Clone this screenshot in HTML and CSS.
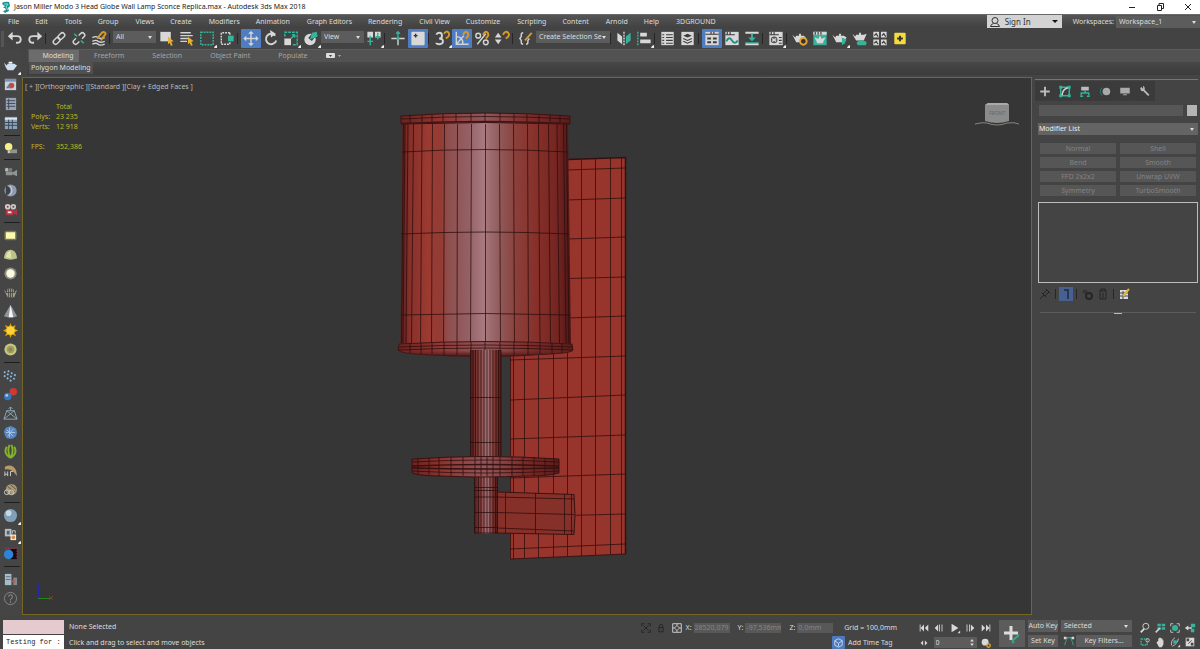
FILE: index.html
```html
<!DOCTYPE html>
<html lang="en">
<head>
<meta charset="utf-8">
<title>Jason Miller Modo 3 Head Globe Wall Lamp Sconce Replica.max - Autodesk 3ds Max 2018</title>
<link rel="stylesheet" href="styles.css">
</head>
<body>
<header class="titlebar">
  <svg class="app-icon" viewBox="0 0 10 12"><path d="M1 2Q4 0 8 1L9 5 7 7 8 10 4 12 2 10 5 9 4 7 2 7 4 5 2 4Z" fill="#17938f"/><path d="M3 3L7 3 5 6 7 9" stroke="#8fe0da" fill="none"/></svg>
  <h1 class="title">Jason Miller Modo 3 Head Globe Wall Lamp Sconce Replica.max - Autodesk 3ds Max 2018</h1>
  <button class="win" aria-label="Minimize"><svg viewBox="0 0 10 10"><path d="M2 5.500H8" stroke="#222"/></svg></button>
  <button class="win" aria-label="Restore"><svg viewBox="0 0 10 10"><path d="M2.500 3.500H6.500V8.500H2.500ZM4 3V1.500H8.500V6.500H7" fill="none" stroke="#222"/></svg></button>
  <button class="win" aria-label="Close"><svg viewBox="0 0 10 10"><path d="M2 2L8 8M8 2L2 8" stroke="#222"/></svg></button>
</header>

<div class="menubar">
  <nav class="menus">
    <button>File</button><button>Edit</button><button>Tools</button><button>Group</button><button>Views</button><button>Create</button><button>Modifiers</button><button>Animation</button><button>Graph Editors</button><button>Rendering</button><button>Civil View</button><button>Customize</button><button>Scripting</button><button>Content</button><button>Arnold</button><button>Help</button><button>3DGROUND</button>
  </nav>
  <button class="signin"><svg viewBox="0 0 12 12"><circle cx="6" cy="4.500" r="3"/><path d="M4.500 7.500Q2 8 1.500 10.500H10.500Q10 8 7.500 7.500"/></svg><span>Sign In</span><i class="caret"></i></button>
  <label class="ws-label" for="ws">Workspaces:</label>
  <span class="select ws"><select id="ws"><option>Workspace_1</option></select></span>
</div>

<div class="toolbar" role="toolbar" aria-label="Main toolbar">
  <i class="grip"></i>
  <button class="ic" aria-label="Undo"><svg viewBox="0 0 20 20"><path class="s thick" d="M5 7.500H12Q16 7.500 16 11T12 14.500H11"/><path class="f" d="M7.500 3V12L2.500 7.500Z"/></svg></button>
  <button class="ic" aria-label="Redo"><svg viewBox="0 0 20 20"><path class="s thick" d="M15 7.500H8Q4 7.500 4 11T8 14.500H9"/><path class="f" d="M12.500 3V12L17.500 7.500Z"/></svg></button>
  <i class="sep"></i>
  <button class="ic" aria-label="Link"><svg viewBox="0 0 20 20"><g class="s" transform="rotate(-45 10 10)"><rect x="2.500" y="7.500" width="8" height="5" rx="2.500"/><rect x="9.500" y="7.500" width="8" height="5" rx="2.500"/></g></svg></button>
  <button class="ic" aria-label="Unlink"><svg viewBox="0 0 20 20"><g class="s" transform="rotate(-45 10 10)"><path d="M8 7.500H5Q2.500 7.500 2.500 10T5 12.500H8M12 7.500H15Q17.500 7.500 17.500 10T15 12.500H12"/></g><path class="ts" d="M5 5L8 8M12 12L15 15"/></svg></button>
  <button class="ic" aria-label="Bind to space warp"><svg viewBox="0 0 20 20"><path class="s" d="M3 9Q7 7 9 9T16 9M3 13Q7 11 9 13T16 13M3 16Q7 14 9 16T16 16"/><path class="ys" d="M8 10L13 4Q16 2 17 5L12 12"/></svg></button>
  <i class="sep"></i>
  <span class="select filter"><select aria-label="Selection filter"><option>All</option></select></span>
  <button class="ic" aria-label="Select object"><svg viewBox="0 0 20 20"><path class="f" d="M3 3H14V13H3Z"/><path class="y" d="M11 8L17 13 14.500 13.500 16 17 14 17.500 13 14.500 11 16Z"/></svg></button>
  <button class="ic" aria-label="Select by name"><svg viewBox="0 0 20 20"><path class="s" d="M3 4H14M3 7H16M3 10H11M3 13H10"/><path class="y" d="M11 8L17 13 14.500 13.500 16 17 14 17.500 13 14.500 11 16Z"/></svg></button>
  <button class="ic fly" aria-label="Rectangular region"><svg viewBox="0 0 20 20"><rect class="ts" x="3.500" y="3.500" width="13" height="13" stroke-dasharray="2 1"/></svg></button>
  <button class="ic" aria-label="Window crossing"><svg viewBox="0 0 20 20"><path class="s" d="M13 4H4V16H13V14M13 4V6" stroke-dasharray="2 1"/><rect class="t" x="11" y="7" width="6" height="6"/></svg></button>
  <i class="sep"></i>
  <button class="ic on" aria-label="Move"><svg viewBox="0 0 20 20"><path class="s" d="M10 4V16M4 10H16"/><path class="f" d="M10 2L13 5H7ZM10 18L13 15H7ZM2 10L5 7V13ZM18 10L15 7V13Z"/></svg></button>
  <button class="ic" aria-label="Rotate"><svg viewBox="0 0 20 20"><path class="s thick" d="M14.500 7A5.500 5.500 0 1 0 15.500 12"/><path class="f" d="M9 1L15 5 10 9Z"/></svg></button>
  <button class="ic fly" aria-label="Scale"><svg viewBox="0 0 20 20"><path class="f" d="M3 10H10V17H3Z"/><path class="ts" d="M3.500 8V3.500H16.500V16.500H12" stroke-dasharray="3 1"/><path class="ts" d="M10 10L14 6M14 6H11M14 6V9"/></svg></button>
  <button class="ic fly" aria-label="Place"><svg viewBox="0 0 20 20"><circle class="f" cx="9" cy="11" r="6"/><path d="M9 11L15 4" stroke="#444" stroke-width="5"/><path class="t" d="M9 11L11 4 16 3 17 8Z"/></svg></button>
  <span class="select coord-sys"><select aria-label="Reference coordinate system"><option>View</option></select></span>
  <button class="ic fly" aria-label="Pivot center"><svg viewBox="0 0 20 20"><path class="f" d="M3 3H9V9H3ZM11 3H17V9H11Z"/><path class="ts" d="M6 7V17M3 13H9M14 4V11M11.500 8H16.500"/></svg></button>
  <i class="sep"></i>
  <button class="ic" aria-label="Manipulate"><svg viewBox="0 0 20 20"><path class="s" d="M3 10H17M10 10V17"/><path class="ts" d="M10 3V10M8 5L10 3 12 5"/><circle class="t" cx="10" cy="10" r="1.500"/></svg></button>
  <button class="ic on" aria-label="Keyboard override"><svg viewBox="0 0 20 20"><rect class="f" x="3" y="3" width="14" height="14" rx="1"/><path d="M5.500 7H9.500M7.500 5V9" stroke="#333" stroke-width="1.500"/></svg></button>
  <i class="sep"></i>
  <button class="ic fly" aria-label="Snaps"><svg viewBox="0 0 20 20"><path class="s thick" d="M4 6Q5 4 7.500 4T10 7 7 10Q11 10 11 13T7.500 16 4 14.500"/><path class="ys" d="M12 5Q15 1 17 4T14 10"/></svg></button>
  <button class="ic on" aria-label="Angle snap"><svg viewBox="0 0 20 20"><path class="s" d="M4 3V16H17M4 16L12 7M4 8Q11 8 11 16"/><path class="ys" d="M11 6Q14 1 16 4T14 10"/></svg></button>
  <button class="ic" aria-label="Percent snap"><svg viewBox="0 0 20 20"><circle class="s" cx="6" cy="7" r="2.500"/><circle class="s" cx="14" cy="14" r="2.500"/><path class="s" d="M5 16L14 5"/><path class="ys" d="M11 6Q14 1 16 4T14 10"/></svg></button>
  <button class="ic" aria-label="Spinner snap"><svg viewBox="0 0 20 20"><path class="f" d="M6 4L9.500 9H2.500ZM6 16L9.500 11H2.500Z"/><path class="ys" d="M11 6Q14 1 16.500 4T14 10"/></svg></button>
  <i class="sep"></i>
  <button class="ic" aria-label="Edit selection sets"><svg viewBox="0 0 20 20"><path class="s" d="M7 4Q5 4 5 6V8L3.500 10 5 12V14Q5 16 7 16M10 16Q12 16 12 14V12L13.500 10"/><path class="ys" d="M9 12L16 4"/></svg></button>
  <span class="select sets"><select aria-label="Named selection sets"><option>Create Selection Se</option></select></span>
  <i class="sep"></i>
  <button class="ic" aria-label="Mirror"><svg viewBox="0 0 20 20"><path class="f" d="M3 4L8 8V16L3 12Z"/><path class="t" d="M17 4L12 8V16L17 12Z"/><path class="s" d="M10 3V17" stroke-dasharray="2 1"/></svg></button>
  <button class="ic fly" aria-label="Align"><svg viewBox="0 0 20 20"><path class="f" d="M6 4H13V8H6ZM6 11H17V15H6Z"/><path class="ts" d="M3.500 3V17" stroke-dasharray="2 1"/></svg></button>
  <i class="sep"></i>
  <button class="ic" aria-label="Scene explorer"><svg viewBox="0 0 20 20"><rect class="f" x="3" y="3" width="13" height="14"/><path class="d" d="M4 6H6M8 6H15M4 9H6M8 9H15M4 12H6M8 12H15M4 15H6M8 15H15"/></svg></button>
  <button class="ic" aria-label="Layer explorer"><svg viewBox="0 0 20 20"><rect class="f" x="3" y="3" width="13" height="14"/><path d="M5 7L9.500 5 14 7 9.500 9Z" fill="#3b3b3b"/><path class="d" d="M5 10L9.500 12 14 10M5 13L9.500 15 14 13"/></svg></button>
  <i class="sep"></i>
  <button class="ic on" aria-label="Toggle ribbon"><svg viewBox="0 0 20 20"><rect class="f" x="3" y="3" width="14" height="14"/><path class="d" d="M3 5.500H17M9 3V5M12 3V5"/><path d="M5 10H9M11 10H15M5 14H9M11 14H15" stroke="#3b3b3b" stroke-width="2"/></svg></button>
  <button class="ic" aria-label="Curve editor"><svg viewBox="0 0 20 20"><rect class="f" x="3" y="3" width="14" height="14"/><path class="d" d="M3 6H13M5 3V6M8 3V6"/><path d="M4 13Q7 7 10 12T16 12" fill="none" stroke="#218c80" stroke-width="2"/></svg></button>
  <button class="ic" aria-label="Schematic view"><svg viewBox="0 0 20 20"><path class="f" d="M3 3H17V5H3ZM3 15H17V17H3Z"/><path class="t" d="M9 5H11V9H14L10 13 6 9H9ZM3 14H17V15H3Z"/></svg></button>
  <i class="sep"></i>
  <button class="ic fly" aria-label="Material editor"><svg viewBox="0 0 20 20"><rect class="f" x="3" y="3" width="14" height="14"/><path class="d" d="M3 6H13M5 3V6M8 3V6M13 9H16M13 12H16M13 15H16"/><circle cx="8" cy="11.500" r="3.500" fill="#555"/><path class="s" d="M6 10L10 13M10 10L6 13"/></svg></button>
  <i class="sep"></i>
  <button class="ic" aria-label="Render setup"><svg viewBox="0 0 20 20"><path class="f" d="M2 6L5 9 6 7H14L16 9 14 14H6L4 10ZM9 5H11V7H9Z"/><circle cx="13.500" cy="13" r="3.500" fill="#333" stroke="#e5a52c" stroke-width="2"/></svg></button>
  <button class="ic" aria-label="Rendered frame window"><svg viewBox="0 0 20 20"><rect class="t" x="3" y="3" width="14" height="14"/><path class="f" d="M3 3H17V6H3ZM4 9L7 10H12L16 9 14 12 13 15H7L6 12ZM9 8H11V10H9Z"/><path class="d" d="M5 3V6M8 3V6M11 3V6"/></svg></button>
  <button class="ic fly" aria-label="Render production"><svg viewBox="0 0 20 20"><path class="f" d="M2 6L5 9 6 7H14L17 9 13 14H6L4 10ZM9 5H11V7H9Z"/><path class="t" d="M12 9L17 11 15 15 12 17Z"/></svg></button>
  <button class="ic" aria-label="Render in cloud"><svg viewBox="0 0 20 20"><path class="f" d="M2 5L5 8 6 6H14L17 5 14 12H6L4 9ZM9 4H11V6H9Z"/><path class="t" d="M8 17Q5 15 8 13 11 10 13 13 17 12 17 15L16 17Z"/></svg></button>
  <button class="ic" aria-label="Render gallery"><svg viewBox="0 0 20 20"><path class="f" d="M3 3H9V9H3ZM11 3H17V9H11ZM3 11H9V17H3ZM11 11H17V17H11Z"/><path class="d" d="M4 7L6 5 8 8M12 7L14 5 16 8M4 15L6 13 8 16M12 15L14 13 16 16"/></svg></button>
  <button class="ic" aria-label="Add-on"><svg viewBox="0 0 20 20"><rect x="4" y="4" width="12" height="12" rx="1" fill="#f4dc3c"/><path d="M10 7V13M7 10H13" stroke="#333" stroke-width="2"/></svg></button>
</div>

<div class="work">
  <aside class="leftbar" role="toolbar" aria-label="Side toolbar">
    <button class="lic fly" aria-label="Render"><svg viewBox="0 0 16 16"><path d="M1 5L4 8 5 6H12L15 8 11 13H5L3 10Z" fill="#cfe0f0"/><path d="M6 4H10V6H6Z" fill="#f8fbff"/></svg></button>
    <button class="lic" aria-label="Frame window"><svg viewBox="0 0 16 16"><rect x="2" y="2" width="12" height="12" fill="#cdd3dc"/><path d="M2 2H14V5H2Z" fill="#7e93b4"/><circle cx="9" cy="9" r="3" fill="#c34b3c"/><path d="M3 12L6 8 9 12Z" fill="#5b81b4"/></svg></button>
    <button class="lic" aria-label="List view"><svg viewBox="0 0 16 16"><rect x="3" y="2" width="11" height="13" fill="#9aa3b2"/><path d="M4 5H13M4 8H13M4 11H13M6 3V14" stroke="#3d4860"/></svg></button>
    <button class="lic" aria-label="Grid view"><svg viewBox="0 0 16 16"><rect x="2" y="2" width="13" height="13" fill="#8fa3b5"/><path d="M2 4H15" stroke="#dce7f0" stroke-width="2"/><path d="M2 8H15M2 11H15M6 5V15M10 5V15" stroke="#34465c"/></svg></button>
    <i class="rule"></i>
    <button class="lic" aria-label="Light lister"><svg viewBox="0 0 16 16"><circle cx="6" cy="6" r="4" fill="#f6f08a"/><path d="M5 10H8V13H5Z" fill="#ccc"/><rect x="8" y="9" width="7" height="4" fill="#92958a"/></svg></button>
    <i class="rule tight"></i>
    <button class="lic" aria-label="Camera"><svg viewBox="0 0 16 16"><path d="M3 8H10V12H3ZM10 9L15 6V13L10 11Z" fill="#8f9595"/><circle cx="4" cy="6" r="2" fill="#b2b6b6"/><circle cx="8" cy="6" r="2" fill="#777"/></svg></button>
    <button class="lic" aria-label="Dome"><svg viewBox="0 0 16 16"><circle cx="8" cy="8" r="6.500" fill="#909daf"/><path d="M3 3A5 5 0 0 1 3 13Z" fill="#3c414b"/><path d="M7 3Q12 8 7 13" stroke="#dde" fill="none"/></svg></button>
    <button class="lic" aria-label="Physical camera"><svg viewBox="0 0 16 16"><path d="M3 8H11V14H3ZM11 10L15 7V14L11 12Z" fill="#b13440"/><circle cx="5" cy="5" r="3" fill="#ccc"/><circle cx="11" cy="5" r="3" fill="#bcc"/><circle cx="5" cy="5" r="1" fill="#a33"/><circle cx="11" cy="5" r="1" fill="#a33"/><path d="M5 10H9V12H5Z" fill="#e8e8e8"/></svg></button>
    <i class="rule"></i>
    <button class="lic" aria-label="Plane light"><svg viewBox="0 0 16 16"><rect x="1.500" y="3" width="13" height="10" rx="2" fill="#77765a"/><rect x="3" y="4.500" width="10" height="7" fill="#fbf8b0"/></svg></button>
    <button class="lic" aria-label="Dome light"><svg viewBox="0 0 16 16"><path d="M1 12Q2 3 8 3T15 12Q8 15 1 12Z" fill="#bdc287"/><path d="M3 11Q4 5 8 4L9 12Z" fill="#dfe3ae"/></svg></button>
    <button class="lic" aria-label="Sphere light"><svg viewBox="0 0 16 16"><circle cx="8" cy="8" r="6.500" fill="#8b8b80"/><circle cx="8" cy="8" r="4.500" fill="#fbfbe0"/></svg></button>
    <button class="lic" aria-label="Mesh light"><svg viewBox="0 0 16 16"><path d="M1 5L4 8 5 4H11L12 8 15 5 12 13H5Z" fill="#a3a18a"/><path d="M6 4V13M8 4V13M10 4V13M3 8H13" stroke="#4a493f"/></svg></button>
    <button class="lic" aria-label="IES light"><svg viewBox="0 0 16 16"><path d="M8 1Q10 4 15 13Q8 16 1 13Q6 4 8 1Z" fill="#90939a"/><path d="M8 1L11 14H6Z" fill="#f5f5f5"/></svg></button>
    <button class="lic" aria-label="Sun"><svg viewBox="0 0 16 16"><path d="M8 0L9.500 4 13.500 2 12 6 16 8 12 10 14 14 9.500 12 8 16 6.500 12 2 14 4 10 0 8 4 6 2 2 6.500 4Z" fill="#dda414"/><circle cx="8" cy="8" r="4.500" fill="#ffd52d"/></svg></button>
    <button class="lic" aria-label="Ambient light"><svg viewBox="0 0 16 16"><circle cx="8" cy="8" r="6.500" fill="#c7c680"/><circle cx="8" cy="8" r="4" fill="#a09d62"/><circle cx="8" cy="8" r="2" fill="#8a8754"/></svg></button>
    <i class="rule"></i>
    <button class="lic" aria-label="Particles"><svg viewBox="0 0 16 16"><path d="M1 4L14 13M5 3L15 9M1 8L10 15" stroke="#86b4d8" stroke-width="2" stroke-dasharray="2 2"/></svg></button>
    <button class="lic" aria-label="Spheres"><svg viewBox="0 0 16 16"><circle cx="11" cy="5" r="4" fill="#cc3a32"/><circle cx="5" cy="10" r="4" fill="#3c74b8"/><circle cx="4" cy="9" r="1.500" fill="#a9cbed"/></svg></button>
    <button class="lic" aria-label="Proxy"><svg viewBox="0 0 16 16"><path d="M4 5H12L15 14H1ZM4 5L15 14M12 5L1 14M8 5V1M6 3L8 1 10 3" fill="none" stroke="#8fa7b8"/></svg></button>
    <button class="lic" aria-label="Scatter"><svg viewBox="0 0 16 16"><path d="M8 1L11 2 14 4 15 8 14 12 11 14 8 15 4 14 2 11 1 7 3 3Z" fill="#5b86bd"/><path d="M4 5L11 12M11 4L5 12M7 3V13M3 8H13" stroke="#a5c4e4"/></svg></button>
    <button class="lic" aria-label="Grass"><svg viewBox="0 0 16 16"><path d="M8 15Q0 10 4 3M8 15Q4 8 7 1M8 15Q12 8 9 1M8 15Q16 10 12 3" stroke="#83b526" stroke-width="2" fill="none"/></svg></button>
    <button class="lic" aria-label="Hair"><svg viewBox="0 0 16 16"><path d="M2 4Q10 0 14 8L15 14 11 9Q7 6 2 7Z" fill="#b99a6b"/><path d="M2 9V14M5 9V14M2 12H5M8 14V9H11" stroke="#ccc" fill="none"/></svg></button>
    <button class="lic" aria-label="Fur"><svg viewBox="0 0 16 16"><circle cx="9" cy="8" r="6" fill="#a99973"/><path d="M5 5L13 11M8 3L14 8M4 9L10 14" stroke="#5c523b"/><circle cx="4" cy="11" r="2.500" fill="none" stroke="#ccc"/><circle cx="9" cy="11" r="2.500" fill="none" stroke="#ccc"/></svg></button>
    <i class="rule"></i>
    <button class="lic fly" aria-label="Material"><svg viewBox="0 0 16 16"><circle cx="8" cy="8" r="7" fill="#7fa0b6"/><circle cx="6" cy="5.500" r="3" fill="#c5d9e5"/></svg></button>
    <button class="lic fly" aria-label="Convert"><svg viewBox="0 0 16 16"><path d="M2 2H9V10H2Z" fill="#b8c0c6"/><path d="M4 4H7V8H4Z" fill="#56616b"/><path d="M8 8H14V14H8Z" fill="#eee"/><circle cx="11" cy="11" r="2" fill="#df8a3c"/><path d="M10 7V4H13V7" stroke="#ccc" fill="none"/></svg></button>
    <button class="lic" aria-label="Compare"><svg viewBox="0 0 16 16"><rect x="8" y="3" width="7" height="11" fill="#180b10"/><path d="M2 2.500H15V14" stroke="#a43a48" stroke-dasharray="2 1" fill="none"/><circle cx="6" cy="9" r="5" fill="#2f83d6"/></svg></button>
    <i class="rule"></i>
    <button class="lic" aria-label="Server"><svg viewBox="0 0 16 16"><rect x="2" y="2" width="7" height="12" fill="#a7bbc9"/><path d="M3 5H8M3 8H8" stroke="#5b7182"/><path d="M11 6H15V14H11Z" fill="#808890"/><path d="M9 10H13" stroke="#c9543c" stroke-width="2"/></svg></button>
    <button class="lic" aria-label="Help"><svg viewBox="0 0 16 16"><circle cx="8" cy="8" r="6.500" fill="none" stroke="#888"/><path d="M6 6Q6 4 8 4T10 6 8 9V10M8 11V12.500" fill="none" stroke="#999"/></svg></button>
  </aside>

  <div class="stage">
    <div class="ribbon">
      <div class="tabs">
        <button class="tab active">Modeling</button><button class="tab">Freeform</button><button class="tab">Selection</button><button class="tab">Object Paint</button><button class="tab last">Populate</button>
        <button class="more" aria-label="Ribbon options"><svg viewBox="0 0 16 6"><rect width="9" height="5" rx="1" fill="#ddd"/><path d="M3 2H6L4.500 4Z" fill="#333"/><path d="M12 2H15L13.500 4Z" fill="#aaa"/></svg></button>
      </div>
      <div class="panelrow"><button class="panelbtn">Polygon Modeling</button></div>
    </div>

    <div class="split">
      <main class="viewport">
        <svg class="scene" viewBox="23 78 1008 536" role="img" aria-label="Wall lamp wireframe model">
          <defs>
            <linearGradient id="shade"><stop offset="0" stop-color="#571d1b"/><stop offset=".05" stop-color="#86302a"/><stop offset=".16" stop-color="#9b3a31"/><stop offset=".24" stop-color="#933c35"/><stop offset=".28" stop-color="#8f4f4e"/><stop offset=".4" stop-color="#946065"/><stop offset=".49" stop-color="#a87b80"/><stop offset=".53" stop-color="#9c6a6e"/><stop offset=".6" stop-color="#8e5554"/><stop offset=".68" stop-color="#8b3f3a"/><stop offset=".8" stop-color="#872f29"/><stop offset=".92" stop-color="#742521"/><stop offset="1" stop-color="#4a1717"/></linearGradient>
            <linearGradient id="rim"><stop offset="0" stop-color="#6b2321"/><stop offset=".2" stop-color="#8c332e"/><stop offset=".5" stop-color="#93565a"/><stop offset=".75" stop-color="#7d2d29"/><stop offset="1" stop-color="#5b1d1b"/></linearGradient>
            <linearGradient id="pipe"><stop offset="0" stop-color="#4d1a1a"/><stop offset=".25" stop-color="#843c38"/><stop offset=".55" stop-color="#a5767a"/><stop offset=".8" stop-color="#823832"/><stop offset="1" stop-color="#4b1717"/></linearGradient>
            <linearGradient id="under" x2="0" y2="1"><stop offset="0" stop-color="#7d302c" stop-opacity="0"/><stop offset="1" stop-color="#3c1212"/></linearGradient>
          </defs>
          <path d="M510 162L626 157V554L510 559Z" fill="#97342b"/>
          <path class="wire" d="M513.500 350V559M524.500 350V558M538.500 350V558M553.500 350V557M567.500 160V556M581.500 159V556M595.500 158V555M610.500 158V554M621.500 157V554M510 172L625 168M510 202L625 198M510 241L625 237M510 280L625 277M510 320L625 316M510 360L625 356M510 400L625 395M510 439L625 435M510 478L625 474M510 517L625 514M510 549L625 544M510.500 350V559L626 554"/>
          <path d="M568 159.500L625.500 157.500V554" fill="none" stroke="#351010" stroke-width="1.500"/>
          <path d="M402.500 121H568L571 345H400.500Z" fill="url(#shade)"/>
          <path class="wire" d="M403.500 124L401.500 343M405 124L403 343M408 124L406 343M413.500 124L411.500 343M422 124L420.500 343M432.500 124L431.500 343M444.500 124L443.500 343M457.500 124L457 343M471.500 124L470.500 343M485.500 124V343M499.500 124L500.500 343M513.500 124L514.500 343M527.500 124L528.500 343M538.500 124L540 343M548.500 124L550.500 343M557 124L559.500 343M563.500 124L566 343M566.500 124L569 343M402 152Q485 147 568 152M401 234Q485 230 569 234M401 315Q485 312 570 315"/>
          <path d="M401 116Q485 110 570 116V124Q485 121 401 124Z" fill="url(#rim)" stroke="#3c1212"/>
          <path class="wire" d="M401 119Q485 114 570 119M410 115V123M422 115V123M432 115V123M443 114V123M456 114V122M471 113V122M485 113V122M500 113V122M514 114V122M527 114V123M539 115V123M550 115V123M560 115V123"/>
          <path d="M401 123.500Q485 119.500 570 123.500" stroke="#431414" stroke-width="1.500" fill="none"/>
          <path d="M399 344Q485 339 572 344L573 350Q572 353 550 354Q485 359 415 354Q399 353 398 349Z" fill="url(#rim)" stroke="#421414"/>
          <path d="M399 349Q485 354 573 349Q572 353 550 354Q485 359 415 354Q399 353 398 349Z" fill="url(#under)"/>
          <path class="wire" d="M399 347Q485 343 572 347M398 350Q485 346 573 350M410 343V353M421 343V354M432 343V354M444 342V355M457 342V355M471 342V355M485 342V355M500 342V355M514 342V355M528 342V355M540 343V354M552 343V354M562 343V353"/>
          <rect x="470.500" y="350" width="30.500" height="107" fill="url(#pipe)"/>
          <path class="wire" d="M470.500 350V457M473 350V457M475.500 350V457M478 350V457M481 350V457M484 350V457M487 350V457M490 350V457M493 350V457M496 350V457M498.500 350V457M501 350V457M470 397.500H501M470 442.500H501"/>
          <path d="M497 492L574 494.500Q576 515 574 534.500L497 533Z" fill="#86302a" stroke="#3c1212"/>
          <path class="wire" d="M497 497L574 499M497 512.500L574 514.500M497 528L574 531M505.500 493V533M535.500 493V534M564.500 494V534M571.500 494V534"/>
          <rect x="474.500" y="474" width="23" height="59.500" fill="url(#pipe)"/>
          <path class="wire" d="M474.500 475V533H497.500V475M478.500 475V533M481 475V533M484 475V533M487 475V533M490 475V533M493 475V533M495.500 475V533M474 487.500H498M474 490.500H498M474 497H498M474 512.500H498M474 527.500H498"/>
          <path d="M412 459Q485 454 559 459V473Q550 476 525 476Q485 478 440 476Q420 476 412 473Z" fill="url(#rim)" stroke="#391111"/>
          <path class="wire" d="M412 462Q485 458 559 462M412 471Q485 475 559 471M418 458V474M429 458V475M439 457V476M451 457V476M463 457V476M475 457V476M481 457V476M487 457V476M493 457V476M500 457V476M512 457V476M523 457V476M534 457V476M545 458V475M554 458V474"/>
          <path d="M412 466Q485 463 559 466M412 468Q485 470 559 468" fill="none" stroke="#371010" stroke-width="1.500"/>
          <path d="M975 124Q983 122 987 123Q997 127 1007 123Q1015 122 1019 124" fill="none" stroke="#858585"/>
          <path d="M985 105L988 103H1007L1009 105V121Q997 125 985 121Z" fill="#8b8b8b"/>
          <path d="M985 105L988 103H1007L1009 105Z" fill="#aaa"/>
          <text x="989" y="115" class="cube">FRONT</text>
          <path d="M38.500 598V583" stroke="#2626a8"/><path d="M38 598.500H50" stroke="#25831c"/><path d="M49 596L53 600M53 596L49 600" stroke="#804020"/>
        </svg>
        <div class="vp-label"><span>[ + ]</span><span>[Orthographic ]</span><span>[Standard ]</span><span>[Clay + Edged Faces ]</span></div>
        <dl class="stats">
          <dt></dt><dd>Total</dd>
          <dt>Polys:</dt><dd>23 235</dd>
          <dt>Verts:</dt><dd>12 918</dd>
          <dt class="fps">FPS:</dt><dd class="fps">352,386</dd>
        </dl>
      </main>

      <aside class="command">
        <div class="cmd-tabs">
          <button class="ic" aria-label="Create"><svg viewBox="0 0 20 20"><path class="m" d="M10 5V15M5 10H15"/></svg></button>
          <button class="ic" aria-label="Modify"><svg viewBox="0 0 20 20"><path class="ts" d="M6 5.500H14M6 14.500H14M5.500 6V14M14.500 6V14"/><path class="t" d="M4 4H7V7H4ZM13 4H16V7H13ZM4 13H7V16H4ZM13 13H16V16H13Z"/><path class="s" d="M7 14Q7 8 13 6"/></svg></button>
          <button class="ic" aria-label="Hierarchy"><svg viewBox="0 0 20 20"><path d="M6 5H14V9H6Z" fill="#bbb"/><path class="ts" d="M10 9V11M6 14V11.500H14V14M5 15H8M12 15H15"/></svg></button>
          <button class="ic" aria-label="Motion"><svg viewBox="0 0 20 20"><circle cx="11.500" cy="10" r="4" fill="#aaa"/><path d="M7 6Q3 10 7 14" fill="none" stroke="#267e74"/></svg></button>
          <button class="ic" aria-label="Display"><svg viewBox="0 0 20 20"><path d="M5 6H15V12H5ZM8 13H12V14H8Z" fill="#aaa"/></svg></button>
          <button class="ic" aria-label="Utilities"><svg viewBox="0 0 20 20"><path d="M8 8L14 14" stroke="#bbb" stroke-width="2"/><path d="M5 7L6 5 8 7 8 4Q11 6 9 9 6 11 5 7Z" fill="#bbb"/></svg></button>
        </div>
        <div class="objname"><input type="text" aria-label="Object name" disabled><button class="swatch" aria-label="Object color"></button></div>
        <span class="select modlist"><select aria-label="Modifier list"><option>Modifier List</option></select></span>
        <div class="mods">
          <button disabled>Normal</button><button disabled>Shell</button>
          <button disabled>Bend</button><button disabled>Smooth</button>
          <button disabled>FFD 2x2x2</button><button disabled>Unwrap UVW</button>
          <button disabled>Symmetry</button><button disabled>TurboSmooth</button>
        </div>
        <div class="stack"></div>
        <div class="stack-tools">
          <button aria-label="Pin stack"><svg viewBox="0 0 14 14"><path d="M2 12L6 8M4 6L8 10M5 7L9 3 11 5 7 9M8 2L12 6" fill="none" stroke="#252525"/></svg></button><i></i>
          <button class="on" aria-label="Show end result"><svg viewBox="0 0 14 14"><path d="M5 3H9V12" fill="none" stroke="#202a44" stroke-width="1.500"/></svg></button><i></i>
          <button aria-label="Make unique"><svg viewBox="0 0 14 14"><path d="M2 5L5 2 8 5 5 7Z" fill="#333"/><circle cx="9" cy="9" r="3" fill="none" stroke="#262626" stroke-width="2"/></svg></button>
          <button aria-label="Remove modifier"><svg viewBox="0 0 14 14"><path d="M3 4H11M5 4V2H9V4M4 5V12H10V5M7 6V11" fill="none" stroke="#252525"/></svg></button><i></i>
          <button aria-label="Configure sets"><svg viewBox="0 0 14 14"><path d="M3 3H11V12H3Z" fill="#ddd"/><path d="M3 6H11M3 9H11M6 4V12" stroke="#444"/><path d="M6 9L12 2" stroke="#e5b33c" stroke-width="2"/></svg></button>
        </div>
        <div class="rollout-end"></div>
      </aside>
    </div>
  </div>
</div>

<footer class="status">
  <div class="listener"><input class="pink" type="text" aria-label="Macro recorder"><input type="text" aria-label="Script listener" value="Testing for :"></div>
  <div class="prompts"><p>None Selected</p><p>Click and drag to select and move objects</p></div>
  <div class="coords">
    <div class="line">
      <button class="sic" aria-label="Isolate"><svg viewBox="0 0 14 14"><path d="M2 5V2H5M9 2H12V5M12 9V12H9M5 12H2V9M4 4L10 10M10 4L4 10" fill="none" stroke="#222"/></svg></button>
      <button class="sic" aria-label="Lock selection"><svg viewBox="0 0 14 14"><path d="M5 6V4Q7 1 9 4V6M4.500 6.500H9.500V11.500H4.500Z" fill="none" stroke="#222"/></svg></button>
      <button class="sic" aria-label="Absolute mode"><svg viewBox="0 0 14 14"><path d="M2 2H12V12H2ZM7 2V4M7 10V12M2 7H4M10 7H12" fill="none" stroke="#ddd"/><path d="M7 4L10 7 7 10 4 7Z" fill="none" stroke="#ddd"/></svg></button>
      <label>X: <input type="text" value="28520,079" disabled></label>
      <label>Y: <input type="text" value="-97,536mm" disabled></label>
      <label>Z: <input type="text" value="0,0mm" disabled></label>
      <span class="grid">Grid = 100,0mm</span>
    </div>
    <div class="line end"><button class="timetag"><svg viewBox="0 0 14 14"><rect width="14" height="14" rx="1" fill="#4d79bd"/><path d="M3 5L7 3 11 5V10L7 12 3 10ZM3 5L7 8 11 5M7 8V11" fill="none" stroke="#cbd8ea"/></svg><span>Add Time Tag</span></button></div>
  </div>
  <div class="play">
    <div class="line">
      <button class="sic" aria-label="Go to start"><svg viewBox="0 0 14 14"><path d="M2 3H3V11H2ZM7 3V11L3 7ZM12 3V11L8 7Z"/></svg></button>
      <button class="sic" aria-label="Previous frame"><svg viewBox="0 0 14 14"><path d="M6 3V11L2 7ZM7 3H8V11H7ZM10 3H11V11H10Z"/></svg></button>
      <button class="sic" aria-label="Play"><svg viewBox="0 0 14 14"><path d="M3 2L11 7 3 12ZM13 10V13H10Z"/></svg></button>
      <button class="sic" aria-label="Next frame"><svg viewBox="0 0 14 14"><path d="M3 3H4V11H3ZM6 3H7V11H6ZM8 3L12 7 8 11Z"/></svg></button>
      <button class="sic" aria-label="Go to end"><svg viewBox="0 0 14 14"><path d="M2 3L6 7 2 11ZM7 3L11 7 7 11ZM11 3H12V11H11Z"/></svg></button>
    </div>
    <div class="line">
      <button class="sic" aria-label="Key mode"><svg viewBox="0 0 14 14"><path d="M6 4V10L3 7ZM8 4V10L11 7Z"/></svg></button>
      <span class="frame"><input type="text" value="0" aria-label="Current frame"><svg viewBox="0 0 6 10"><path d="M3 1L5 4H1ZM3 9L5 6H1Z"/></svg></span>
      <button class="sic" aria-label="Time configuration"><svg viewBox="0 0 14 14"><circle cx="6" cy="6" r="4"/><circle cx="10" cy="10" r="2" fill="#444" stroke="#e5a52c" stroke-width="1.500"/></svg></button>
    </div>
  </div>
  <button class="bigkey" aria-label="Set keys"><svg viewBox="0 0 26 26"><path d="M12 5V19M5 12H19" stroke="#ddd" stroke-width="3"/><path d="M13 20L20 14M13 20L15 22" stroke="#35a78d" stroke-width="2"/></svg></button>
  <div class="keys">
    <button class="btn">Auto Key</button>
    <span class="select keysel"><select aria-label="Key selection"><option>Selected</option></select></span>
    <button class="btn">Set Key</button>
    <div class="line"><button class="sic" aria-label="Tangents"><svg viewBox="0 0 14 14"><path d="M2 12Q4 3 7 3T12 12M2 3H12" fill="none" stroke="#3aa892"/><path d="M1 2H4V5H1ZM10 2H13V5H10Z"/></svg></button><button class="btn filters">Key Filters...</button></div>
  </div>
  <div class="nav">
    <button class="sic" aria-label="Zoom"><svg viewBox="0 0 14 14"><circle cx="8" cy="5" r="3.500" fill="none" stroke="#ddd"/><path d="M6 8L2 12" stroke="#ddd" stroke-width="2"/></svg></button>
    <button class="sic" aria-label="Zoom all"><svg viewBox="0 0 14 14"><path class="t" d="M4 2H8V5H4ZM9 2H13V5H9ZM4 6H8V9H4ZM9 6H13V9H9Z"/><path d="M7 7L2 12" stroke="#ccc" stroke-width="2"/></svg></button>
    <button class="sic" aria-label="Zoom extents"><svg viewBox="0 0 14 14"><path d="M2 5V2H5M9 2H12V5M12 9V12H9M5 12H2V9" fill="none" stroke="#ccc"/><circle class="t" cx="7" cy="7" r="3.500"/></svg></button>
    <button class="sic" aria-label="Zoom extents all"><svg viewBox="0 0 14 14"><path class="t" d="M8 2H13V6H8ZM8 8H12V12H8Z"/><path d="M1 7L5 4V6H9V8H5V10Z"/></svg></button>
    <button class="sic" aria-label="Zoom region"><svg viewBox="0 0 14 14"><rect class="ts" x="2.500" y="3.500" width="7" height="7" stroke-dasharray="2 1"/><circle cx="10" cy="5" r="2" fill="none" stroke="#ccc"/></svg></button>
    <button class="sic" aria-label="Pan"><svg viewBox="0 0 14 14"><path d="M4 6H5V3H6V2H8V3H10V5H11V10L9 13H6L3 8Z"/></svg></button>
    <button class="sic" aria-label="Orbit"><svg viewBox="0 0 14 14"><path d="M7 2Q2 5 3 11M11 3Q10 9 4 12" fill="none" stroke="#ccc"/><path class="t" d="M5 5H9V9H5Z"/><path d="M13 10V13H10Z"/></svg></button>
    <button class="sic" aria-label="Maximize viewport"><svg viewBox="0 0 14 14"><path d="M2 2H12V12H2Z"/><path d="M3 3H6V6H3ZM8 8H11V11H8Z" fill="#444"/><path d="M5 9L9 5" stroke="#444"/></svg></button>
  </div>
</footer>
</body>
</html>
```
FILE: styles.css
```css
* { box-sizing: border-box; }

body {
  margin: 0;
  min-height: 100vh;
  display: flex;
  flex-direction: column;
  background: #444;
  color: #dcdcdc;
  font: 7px/10px "Noto Sans", "Open Sans", sans-serif;
}

button, input, select {
  font: inherit;
  color: inherit;
  border: 0;
  border-radius: 0;
  margin: 0;
  padding: 0;
  background: none;
}

p, h1, dl, dd { margin: 0; }
svg { display: block; }

/* title bar */
.titlebar {
  display: flex;
  align-items: center;
  height: 14px;
  background: #fff;
  color: #222;
  padding: 0 7px 0 1px;
}
.app-icon { width: 10px; height: 12px; }
.title {
  flex: 1;
  padding-left: 3px;
  font: 7px/12px "Noto Sans", "Open Sans", sans-serif;
}
.win { width: 10px; margin-left: 18px; }
.win svg { width: 10px; height: 10px; }

/* menu bar */
.menubar {
  display: flex;
  align-items: center;
  height: 14px;
  background: linear-gradient(#555, #414141);
  border-top: 1px solid #6a6a6a;
}
.menus { display: flex; gap: 16px; padding-left: 8px; flex: 1; }
.menus button:nth-child(even) { margin-right: 1px; }
.signin {
  display: flex;
  align-items: center;
  gap: 4px;
  width: 75px;
  height: 14px;
  padding: 0 4px 0 2px;
  background: #d3d3d3;
  color: #333;
}
.signin svg { width: 12px; height: 12px; fill: none; stroke: #333; }
.signin span { flex: 1; text-align: left; font-size: 8px; }
.caret { border: 3px solid transparent; border-top-color: #111; border-bottom: 0; }
.ws-label { padding: 0 2px 0 11px; }

/* drop-downs */
.select { position: relative; display: block; background: #5c5c5c; height: 12px; }
.select select {
  appearance: none;
  display: block;
  width: 100%;
  height: 100%;
  padding: 0 8px 0 3px;
}
.select::after {
  content: "";
  position: absolute;
  right: 4px;
  top: 5px;
  border: 2px solid transparent;
  border-top: 3px solid #ddd;
  border-bottom: 0;
  pointer-events: none;
}
.ws { width: 84px; }

/* main toolbar */
.toolbar { display: flex; align-items: center; height: 21px; background: #434343; }
.grip { width: 3px; height: 16px; margin: 0 1px; background: #555; }
.ic { position: relative; width: 20px; height: 19px; border-radius: 1px; }
.ic svg { width: 20px; height: 19px; }
.on { background: #4f7dc2; }
.fly::after {
  content: "";
  position: absolute;
  right: 0;
  bottom: 0;
  border: 1px solid transparent;
  border-right: 2px solid #eee;
  border-bottom: 2px solid #eee;
}
.sep { width: 4px; height: 11px; border-left: 1px solid #262626; border-right: 2px solid transparent; }
.filter { width: 43px; margin-right: 1px; }
.coord-sys { width: 43px; }
.sets { width: 74px; }
.toolbar .select { margin-bottom: 4px; }
.sets select { padding-right: 0; }

.s { fill: none; stroke: #d4d4d4; stroke-width: 1.5; }
.thick { stroke-width: 2; }
.f { fill: #d8d8d8; }
.t { fill: #35b49c; }
.ts { fill: none; stroke: #35b49c; stroke-width: 1.5; }
.y { fill: #eab12f; }
.ys { fill: none; stroke: #d99a28; stroke-width: 2; }
.d { fill: none; stroke: #3b3b3b; stroke-width: 1.2; }
.m { stroke: #bbb; stroke-width: 2; }

/* work area */
.work { display: flex; flex: 1; }
.leftbar {
  display: flex;
  flex-direction: column;
  width: 22px;
  padding-top: 7px;
  background: #454545;
}
.lic { position: relative; width: 21px; height: 19px; padding-left: 3px; }
.lic svg { width: 15px; height: 15px; }
.rule { height: 7px; border-top: 3px solid transparent; border-bottom: 3px solid transparent; background: #1d1d1d; background-clip: padding-box; margin: 0 2px 0 4px; }
.rule.tight { height: 4px; border-top-width: 1px; border-bottom-width: 2px; }

.stage { display: flex; flex-direction: column; flex: 1; min-width: 0; }
.tabs { display: flex; height: 13px; background: #525252; margin-left: 6px; border-top: 1px solid #5c5c5c; color: #a5a5a5; }
.tab { margin-right: 28px; line-height: 12px; }
.tab.active { width: 50px; margin: 0 15px 0 1px; background: #6c6c6c; color: #ddd; padding-left: 8px; text-align: center; }
.tab.last { margin-right: 18px; }
.more { width: 16px; }
.more svg { width: 16px; height: 6px; }
.panelrow { height: 13px; margin-left: 6px; background: linear-gradient(#474747, #3c3c3c); }
.panelbtn { height: 12px; padding: 0 2px; background: #505050; color: #ddd; margin-left: 1px; line-height: 12px; }

.split { display: flex; flex: 1; }
.viewport {
  position: relative;
  flex: 1;
  min-width: 0;
  margin-top: 2px;
  border: 1px solid #766722;
  background: #363636;
}
.scene { width: 100%; height: auto; }
.wire { fill: none; stroke: #2a0c0c; stroke-width: 1; stroke-opacity: .75; }
.cube { font: 5px "Noto Sans", sans-serif; fill: #666; }
.vp-label { position: absolute; left: 2px; top: 4px; display: flex; color: #bbb; }
.stats {
  position: absolute;
  left: 8px;
  top: 24px;
  display: grid;
  grid-template-columns: 25px auto;
  color: #bdb923;
}
.stats dt, .stats dd { min-height: 10px; }
.stats .fps { padding-top: 10px; }

/* command panel */
.command { width: 168px; padding: 4px 2px 0 6px; }
.cmd-tabs { display: flex; border-top: 1px solid #757575; padding-top: 1px; margin: 0 0 2px -3px; }
.cmd-tabs .ic { background: #3b3b3b; height: 20px; }
.objname { display: flex; gap: 4px; padding: 2px 1px 0; }
.objname input { flex: 1; min-width: 0; height: 11px; background: #575757; }
.swatch { width: 10px; height: 11px; background: #b5b5b5; }
.modlist { height: 12px; margin-top: 7px; background: #646464; color: #eee; }
.modlist select { padding-left: 1px; }
.mods { display: grid; grid-template-columns: 1fr 1fr; gap: 3px 4px; padding: 8px 2px 6px; }
.mods button { height: 11px; background: #565656; color: #838383; line-height: 9px; }
.stack { height: 81px; border: 1px solid #bdbdbd; }
.stack-tools { display: flex; align-items: center; gap: 2px; height: 22px; }
.stack-tools button { width: 14px; height: 14px; }
.stack-tools svg { width: 14px; height: 14px; }
.stack-tools i { width: 1px; height: 10px; margin: 0 1px; background: #262626; }
.stack-tools .on { background: #46618f; }
.rollout-end { margin: 7px 2px 0; border-top: 1px solid #5c5c5c; }
.rollout-end::after { content: ""; display: block; width: 8px; margin: 0 auto; border-top: 1px solid #bbb; }

/* status bar */
.status { display: flex; height: 34px; padding: 5px 3px 0; background: #444; white-space: nowrap; }
.listener { width: 61px; height: 29px; display: grid; gap: 1px; }
.listener input {
  width: 100%;
  min-width: 0;
  height: 14px;
  padding-left: 3px;
  background: #fff;
  color: #222;
  font: 7px "Liberation Mono", monospace;
}
.listener .pink { background: #e5cbcf; }
.prompts { flex: 1; padding: 2px 5px; display: grid; grid-template-rows: 16px 10px; }
.line { display: flex; align-items: center; height: 15px; }
.sic { width: 15px; height: 15px; display: grid; place-items: center; }
.sic svg { width: 12px; height: 12px; fill: #d8d8d8; }
.coords { width: 258px; }
.coords .sic { margin-right: 2px; }
.coords label { display: flex; gap: 2px; margin-right: 8px; }
.coords input { width: 36px; height: 10px; background: #585858; color: #858585; padding-left: 1px; }
.grid { padding-left: 3px; }
.end { padding-left: 193px; }
.timetag { display: flex; align-items: center; gap: 3px; }
.timetag svg { width: 13px; height: 13px; }
.play { width: 82px; margin-left: 20px; }
.play .line { justify-content: space-between; padding-right: 6px; }
.play .sic { margin-left: -1px; }
.frame { display: flex; align-items: center; width: 43px; height: 11px; background: #5c5c5c; padding: 0 2px; }
.frame input { flex: 1; min-width: 0; }
.frame svg { width: 6px; height: 9px; fill: #ddd; }
.bigkey { width: 26px; height: 27px; margin-right: 3px; background: #5c5c5c; }
.bigkey svg { width: 26px; height: 26px; }
.keys { display: grid; grid-template-columns: 30px 71px; grid-template-rows: 12px 12px; gap: 3px; }
.keys .line { height: 12px; }
.keys .sic { height: 12px; }
.btn { height: 12px; background: #5c5c5c; }
.filters { flex: 1; }
.nav { display: grid; grid-template-columns: repeat(4, 15px); grid-auto-rows: 14px; margin-left: 5px; }
```
